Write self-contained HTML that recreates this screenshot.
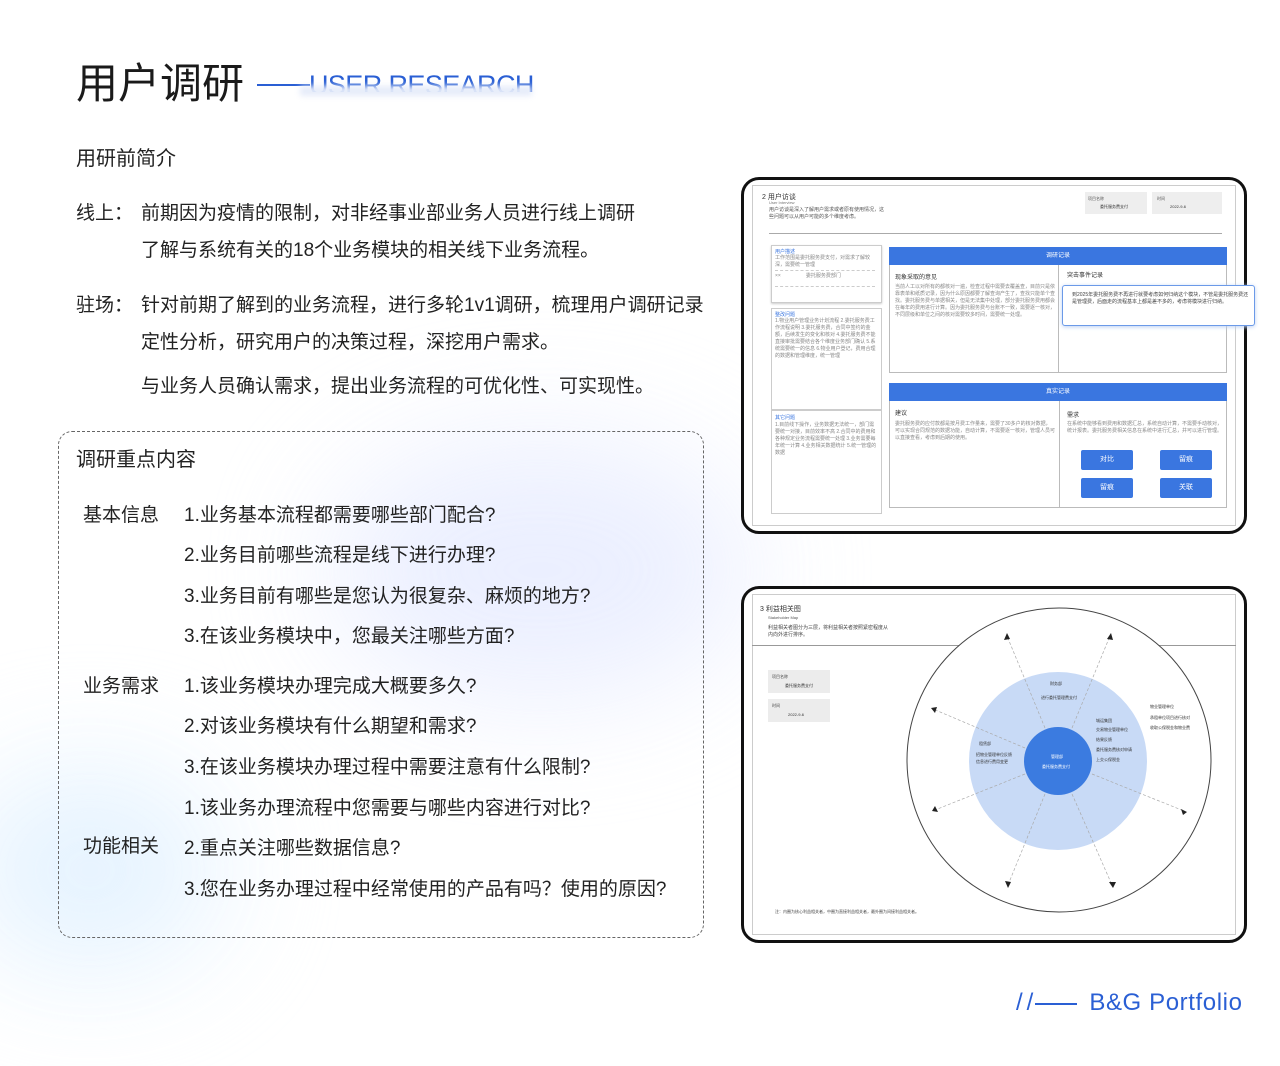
<!DOCTYPE html>
<html><head><meta charset="utf-8"><style>
*{margin:0;padding:0;box-sizing:border-box}
body{width:1280px;height:1066px;background:#fff;position:relative;overflow:hidden;font-family:"Liberation Sans","Noto Sans CJK SC",sans-serif;color:#222}
.a{position:absolute;white-space:nowrap}
.t{font-size:19px;color:#222}
.tiny{font-size:5px;color:#888;line-height:7px;white-space:normal}
.glow{position:absolute;border-radius:50%;filter:blur(60px)}
</style></head><body>
<div class="glow" style="left:330px;top:440px;width:420px;height:260px;background:#e6ebff;opacity:.8"></div>
<div class="glow" style="left:-40px;top:770px;width:260px;height:200px;background:#e1f1ff;opacity:.9"></div>

<div class="a" style="left:76px;top:58px;font-size:42px;color:#1a1a1a;line-height:52px">用户调研</div>
<div class="a" style="left:257px;top:84px;width:53px;height:2px;background:#2a5fd4"></div>
<div class="a" style="left:309px;top:68px;height:24px;overflow:hidden;font-size:27px;color:#2a5fd4;line-height:34px;letter-spacing:-0.6px">USER RESEARCH</div>
<div class="a" style="left:300px;top:86px;width:232px;height:10px;background:#e6ecfa;filter:blur(3px)"></div>

<div class="a" style="left:76px;top:146px;font-size:20px;line-height:26px">用研前简介</div>
<div class="a t" style="left:76px;top:201px;line-height:26px">线上：</div>
<div class="a t" style="left:141px;top:201px;line-height:26px">前期因为疫情的限制，对非经事业部业务人员进行线上调研</div>
<div class="a t" style="left:141px;top:238px;line-height:26px">了解与系统有关的18个业务模块的相关线下业务流程。</div>
<div class="a t" style="left:76px;top:293px;line-height:26px">驻场：</div>
<div class="a t" style="left:141px;top:293px;line-height:26px">针对前期了解到的业务流程，进行多轮1v1调研，梳理用户调研记录</div>
<div class="a t" style="left:141px;top:330px;line-height:26px">定性分析，研究用户的决策过程，深挖用户需求。</div>
<div class="a t" style="left:141px;top:374px;line-height:26px">与业务人员确认需求，提出业务流程的可优化性、可实现性。</div>

<div class="a" style="left:58px;top:431px;width:646px;height:507px;border:1.5px dashed #666;border-radius:14px"></div>
<div class="a" style="left:76px;top:447px;font-size:20px;line-height:26px">调研重点内容</div>
<div class="a t" style="left:83px;top:503px;line-height:26px">基本信息</div>
<div class="a t" style="left:83px;top:674px;line-height:26px">业务需求</div>
<div class="a t" style="left:83px;top:834px;line-height:26px">功能相关</div>
<div class="a t" style="left:184px;top:503px;line-height:26px">1.业务基本流程都需要哪些部门配合?</div>
<div class="a t" style="left:184px;top:543px;line-height:26px">2.业务目前哪些流程是线下进行办理?</div>
<div class="a t" style="left:184px;top:584px;line-height:26px">3.业务目前有哪些是您认为很复杂、麻烦的地方?</div>
<div class="a t" style="left:184px;top:624px;line-height:26px">3.在该业务模块中，您最关注哪些方面?</div>
<div class="a t" style="left:184px;top:674px;line-height:26px">1.该业务模块办理完成大概要多久?</div>
<div class="a t" style="left:184px;top:714px;line-height:26px">2.对该业务模块有什么期望和需求?</div>
<div class="a t" style="left:184px;top:755px;line-height:26px">3.在该业务模块办理过程中需要注意有什么限制?</div>
<div class="a t" style="left:184px;top:796px;line-height:26px">1.该业务办理流程中您需要与哪些内容进行对比?</div>
<div class="a t" style="left:184px;top:836px;line-height:26px">2.重点关注哪些数据信息?</div>
<div class="a t" style="left:184px;top:877px;line-height:26px">3.您在业务办理过程中经常使用的产品有吗？使用的原因?</div>

<!-- card 1 -->
<div class="a" style="left:741px;top:177px;width:506px;height:357px;border:3px solid #111;border-radius:18px;background:#fff"></div>
<div class="a" style="left:752px;top:185px;width:484px;height:341px;border:1px solid #ccc;background:#fff"></div>
<div class="a" style="left:762px;top:192px;font-size:7px;color:#333">2 用户访谈</div>
<div class="a" style="left:769px;top:200px;font-size:4px;color:#777">User Interview</div>
<div class="a tiny" style="left:769px;top:207px;width:115px;color:#555">用户访谈是深入了解用户需求或者原有使用情况，这些问题可以从用户可能的多个维度考虑。</div>
<div class="a" style="left:1085px;top:192px;width:62px;height:22px;background:#eee"></div>
<div class="a" style="left:1152px;top:192px;width:70px;height:22px;background:#eee"></div>
<div class="a" style="left:1088px;top:196px;font-size:4px;color:#555">项目名称</div>
<div class="a" style="left:1100px;top:204px;font-size:4px;color:#333">委托服务费支付</div>
<div class="a" style="left:1157px;top:196px;font-size:4px;color:#555">时间</div>
<div class="a" style="left:1170px;top:204px;font-size:4px;color:#333">2022-9-6</div>
<div class="a" style="left:769px;top:233px;width:453px;height:1px;background:#aaa"></div>
<div class="a" style="left:771px;top:245px;width:111px;height:58px;border:1px solid #ccc;box-shadow:0 1px 2px #ccc"></div>
<div class="a" style="left:771px;top:308px;width:111px;height:102px;border:1px solid #ccc"></div>
<div class="a" style="left:771px;top:410px;width:111px;height:104px;border:1px solid #ccc"></div>
<div class="a" style="left:775px;top:248px;font-size:5px;color:#3a76e0">用户描述</div>
<div class="a tiny" style="left:775px;top:255px;width:100px">工作范围是委托服务费支付，对需求了解较深，需要统一管理</div>
<div class="a" style="left:775px;top:270px;width:100px;border-top:1px dashed #ccc"></div>
<div class="a tiny" style="left:775px;top:273px;width:100px">××　　　　　委托服务费部门</div>
<div class="a" style="left:775px;top:286px;width:100px;border-top:1px dashed #ccc"></div>
<div class="a" style="left:775px;top:311px;font-size:5px;color:#3a76e0">整改问题</div>
<div class="a tiny" style="left:775px;top:318px;width:102px">1.物业用户管理业务计划流程 2.委托服务费工作流程说明 3.委托服务费，合同中签约的金额，后续发生的变化和核对 4.委托服务费不能直接审批需要结合各个维度业务部门确认 5.系统需要统一的信息 6.物业用户登记，费用合理的数据和管理维度，统一管理</div>
<div class="a" style="left:775px;top:414px;font-size:5px;color:#3a76e0">其它问题</div>
<div class="a tiny" style="left:775px;top:422px;width:102px">1.目前线下操作，业务数据无法统一，部门需要统一对接，目前效率不高 2.合同中的费用和各种规定业务流程需要统一处理 3.业务需要每年统一计算 4.业务相关数据统计 5.统一管理的数据</div>

<div class="a" style="left:889px;top:247px;width:338px;height:126px;border:1px solid #bbb"></div>
<div class="a" style="left:889px;top:247px;width:338px;height:18px;background:#3a76e0;color:#fff;font-size:6px;text-align:center;line-height:18px">调研记录</div>
<div class="a" style="left:1058px;top:265px;width:1px;height:108px;background:#bbb"></div>
<div class="a" style="left:895px;top:272px;font-size:6px;color:#333">现象采取的意见</div>
<div class="a tiny" style="left:895px;top:284px;width:160px">当前人工以对所有的都核对一遍，检查过程中需要去覆盖查，目前只是依靠表单和纸质记录，因为什么原因都要了解查询产生了，查找只能单个查找。委托服务费与单据相关，但是无法集中处理，部分委托服务费用都会在每年的费用进行计算。因为委托服务费与台账不一致，需要逐一核对，不同层级和单位之间的核对需要较多时间，需要统一处理。</div>
<div class="a" style="left:1067px;top:270px;font-size:6px;color:#333">突击事件记录</div>
<div class="a" style="left:1062px;top:285px;width:193px;height:41px;border:1px solid #6b9ae8;border-radius:3px;background:#fff;box-shadow:0 1px 4px #bcd0f3"></div>
<div class="a tiny" style="left:1072px;top:292px;width:178px;color:#444">到2025年委托服务费不再进行就要考虑如何归纳这个模块，不管是委托服务费还是管理费，后面走的流程基本上都是差不多的，考虑将模块进行归纳。</div>

<div class="a" style="left:889px;top:383px;width:338px;height:125px;border:1px solid #bbb"></div>
<div class="a" style="left:889px;top:383px;width:338px;height:18px;background:#3a76e0;color:#fff;font-size:6px;text-align:center;line-height:18px">真实记录</div>
<div class="a" style="left:1059px;top:401px;width:1px;height:107px;background:#bbb"></div>
<div class="a" style="left:895px;top:408px;font-size:6px;color:#333">建议</div>
<div class="a tiny" style="left:895px;top:421px;width:160px">委托服务费的应付款都是按月费工作量来，需要了30多户的核对数据，可以实现合同规范的数据功能，自动计算，不需要逐一核对，管理人员可以直接查看，考虑到后期的使用。</div>
<div class="a" style="left:1067px;top:410px;font-size:6px;color:#333">需求</div>
<div class="a tiny" style="left:1067px;top:421px;width:155px">在系统中能够看到费用和数据汇总，系统自动计算，不需要手动核对，统计报表。委托服务费相关信息在系统中进行汇总，并可以进行管理。</div>
<div class="a" style="left:1081px;top:450px;width:52px;height:20px;background:#3a76e0;border-radius:2px;color:#fff;font-size:7px;text-align:center;line-height:20px">对比</div>
<div class="a" style="left:1160px;top:450px;width:52px;height:20px;background:#3a76e0;border-radius:2px;color:#fff;font-size:7px;text-align:center;line-height:20px">留痕</div>
<div class="a" style="left:1081px;top:478px;width:52px;height:20px;background:#3a76e0;border-radius:2px;color:#fff;font-size:7px;text-align:center;line-height:20px">留痕</div>
<div class="a" style="left:1160px;top:478px;width:52px;height:20px;background:#3a76e0;border-radius:2px;color:#fff;font-size:7px;text-align:center;line-height:20px">关联</div>

<!-- card 2 -->
<div class="a" style="left:741px;top:586px;width:506px;height:357px;border:3px solid #111;border-radius:18px;background:#fff"></div>
<div class="a" style="left:752px;top:594px;width:484px;height:341px;border:1px solid #ccc;background:#fff"></div>
<div class="a" style="left:752px;top:645px;width:484px;height:1px;background:#999"></div>
<div class="a" style="left:760px;top:604px;font-size:7px;color:#333">3 利益相关图</div>
<div class="a" style="left:768px;top:615px;font-size:4px;color:#555">Stakeholder Map</div>
<div class="a tiny" style="left:768px;top:625px;width:120px;color:#444">利益相关者图分为三层，将利益相关者按照紧密程度从内向外进行排序。</div>
<div class="a" style="left:768px;top:670px;width:62px;height:23px;background:#ececec"></div>
<div class="a" style="left:768px;top:699px;width:62px;height:23px;background:#ececec"></div>
<div class="a" style="left:772px;top:674px;font-size:4px;color:#444">项目名称</div>
<div class="a" style="left:785px;top:683px;font-size:4px;color:#333">委托服务费支付</div>
<div class="a" style="left:772px;top:703px;font-size:4px;color:#444">时间</div>
<div class="a" style="left:788px;top:712px;font-size:4px;color:#333">2022-9-6</div>
<div class="a" style="left:775px;top:909px;font-size:4px;color:#444">注：内圈为核心利益相关者，中圈为直接利益相关者，最外圈为间接利益相关者。</div>
<svg class="a" style="left:0;top:0" width="1280" height="1066">
<circle cx="1059" cy="760" r="152" fill="#fff" stroke="#444" stroke-width="1"/>
<circle cx="1058" cy="761" r="89" fill="#c8daf6"/>
<circle cx="1058" cy="761" r="34" fill="#3b7be0"/>
<g stroke="#aaa" stroke-width=".7" stroke-dasharray="3 2" fill="none">
<line x1="1045" y1="728" x2="1007" y2="636"/><line x1="1072" y1="728" x2="1110" y2="636"/>
<line x1="1025" y1="748" x2="933" y2="709"/><line x1="1092" y1="774" x2="1184" y2="811"/>
<line x1="1025" y1="774" x2="935" y2="810"/><line x1="1045" y1="794" x2="1008" y2="885"/>
<line x1="1072" y1="794" x2="1112" y2="885"/>
</g>
<g fill="#222">
<polygon points="1007,633 1004,640 1010,639"/><polygon points="1111,633 1107,639 1113,640"/>
<polygon points="931,708 935,713 937,707"/><polygon points="1187,812 1181,809 1183,815"/>
<polygon points="932,811 935,806 938,812"/><polygon points="1008,888 1005,881 1011,882"/>
<polygon points="1113,888 1109,882 1116,882"/>
</g>
<g font-size="4" fill="#333" font-family="Liberation Sans, Noto Sans CJK SC, sans-serif">
<text x="1050" y="685">财务部</text><text x="1041" y="699">进行委托管理费支付</text>
<text x="979" y="745">租赁部</text><text x="976" y="756">招物业管理单位反馈</text><text x="976" y="763">信息进行费用变更</text>
<text x="1096" y="722">城运集团</text><text x="1096" y="731">交易物业管理单位</text><text x="1096" y="741">结果反馈</text><text x="1096" y="751">委托服务费核对申请</text><text x="1096" y="761">上交公保税金</text>
<text x="1150" y="708">物业管理单位</text><text x="1150" y="719">承租单位项目进行核对</text><text x="1150" y="729">收取公保税金和物业费</text>
<text x="1051" y="758" fill="#fff">管理部</text><text x="1042" y="768" fill="#fff">委托服务费支付</text>
</g>
</svg>

<div class="a" style="left:1016px;top:988px;font-size:24px;color:#2a5fd4;line-height:30px"><span style="letter-spacing:4px">//</span><span style="display:inline-block;width:42px;height:2px;background:#2a5fd4;vertical-align:middle;margin:0 12px 0 -2px"></span><span style="letter-spacing:0.6px">B&amp;G Portfolio</span></div>
</body></html>
